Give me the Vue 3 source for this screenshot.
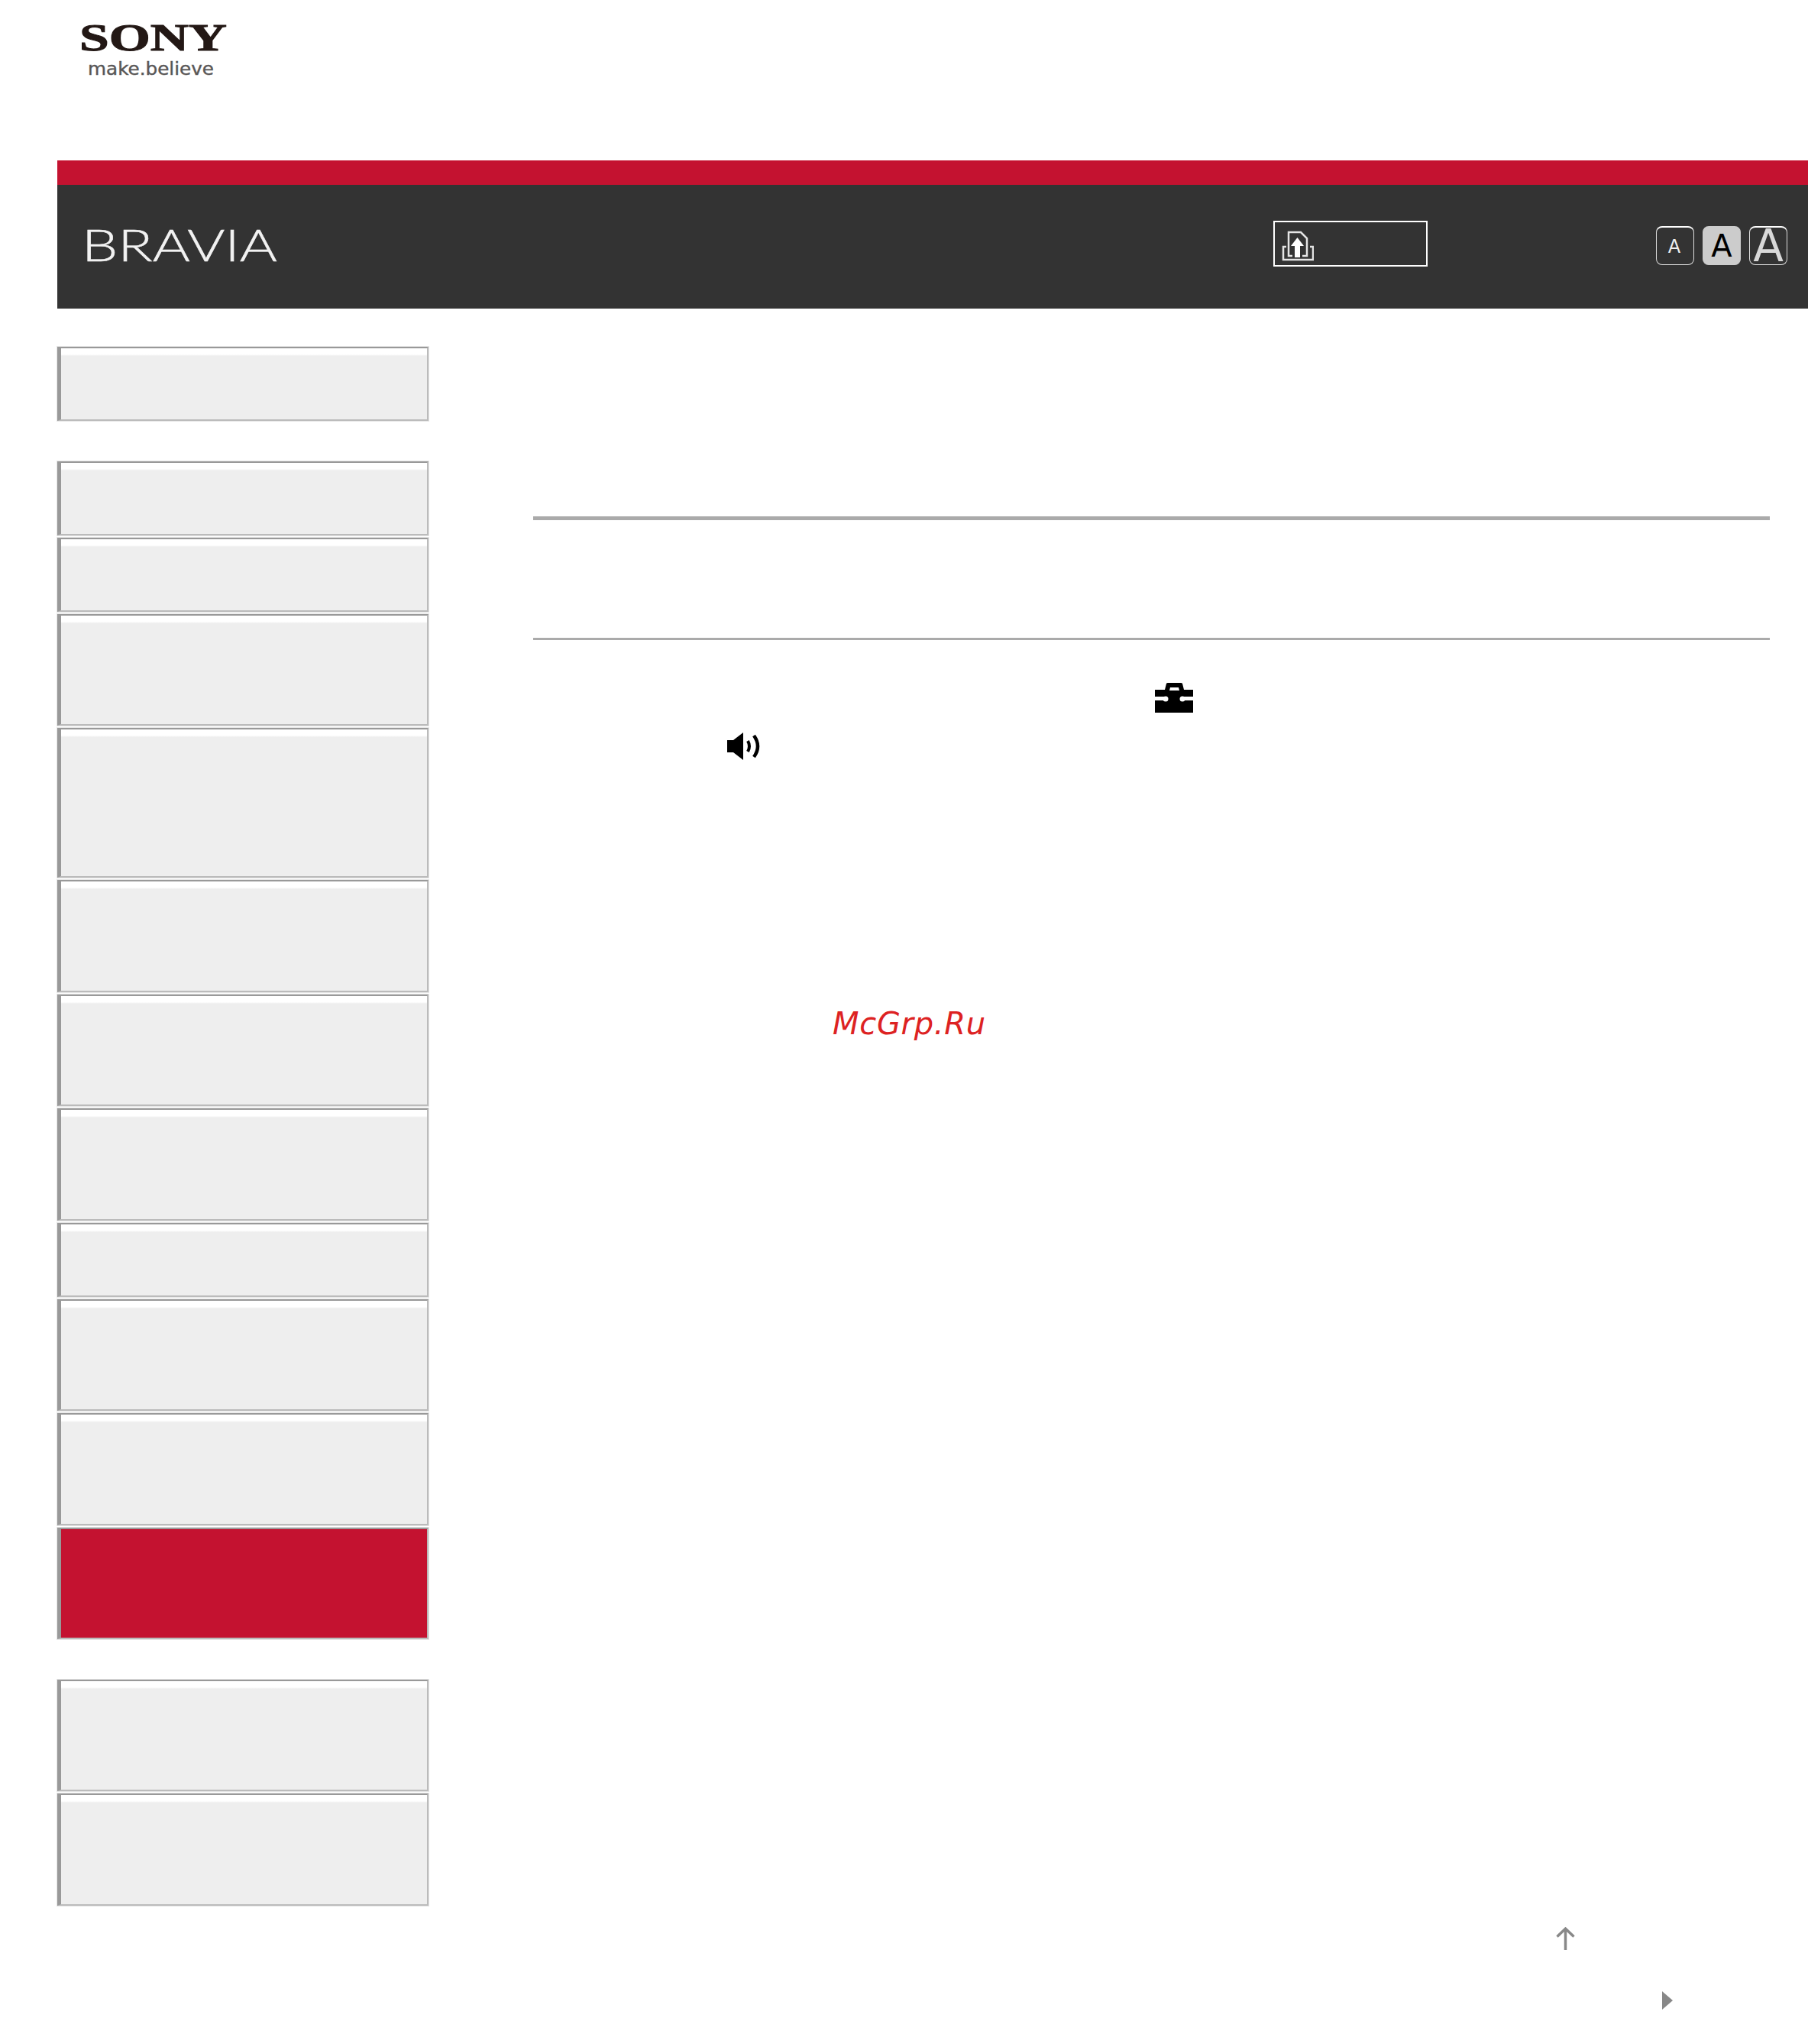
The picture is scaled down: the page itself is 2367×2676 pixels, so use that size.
<script setup>
const topItem = [{ size: 'single' }]
const mainItems = [
  { size: 'single' }, { size: 'single' }, { size: 'double' }, { size: 'triple' },
  { size: 'double' }, { size: 'double' }, { size: 'double' }, { size: 'single' },
  { size: 'double' }, { size: 'double' }, { size: 'double', active: true }
]
const bottomItems = [{ size: 'double' }, { size: 'double' }]
</script>

<template>
  <div class="page">
    <div class="logo-bar">
      <svg class="logo" width="210" height="100" viewBox="0 0 210 100">
        <text x="9" y="56" class="sony" textLength="193" lengthAdjust="spacingAndGlyphs">SONY</text>
        <text x="20" y="88" class="tagline" textLength="165" lengthAdjust="spacingAndGlyphs">make.believe</text>
      </svg>
    </div>

    <header class="header">
      <div class="red-band"></div>
      <div class="dark-band">
        <svg class="brand" width="280" height="80" viewBox="0 0 280 80">
          <text x="5" y="60" class="bravia" textLength="256" lengthAdjust="spacingAndGlyphs">BRAVIA</text>
        </svg>
        <div class="search-box">
          <svg width="42" height="40" viewBox="0 0 42 40" fill="none" stroke="#e4e4e4" stroke-width="2.500">
            <path d="M14 33H9V2H25L33 10V33H27" />
            <path d="M6 21H2V38H41V21H37" />
            <path d="M20.500 9L12 20H17V35H24V20H29Z" fill="#fff" stroke="none" />
          </svg>
        </div>
        <div class="sizes">
          <button class="size small">A</button>
          <button class="size medium">A</button>
          <button class="size large">A</button>
        </div>
      </div>
    </header>

    <div class="body">
      <nav class="sidebar">
        <div class="group">
          <a v-for="(item, i) in topItem" :key="i" class="nav-item" :class="item.size"></a>
        </div>
        <div class="group">
          <a v-for="(item, i) in mainItems" :key="i" class="nav-item" :class="[item.size, { active: item.active }]"></a>
        </div>
        <div class="group">
          <a v-for="(item, i) in bottomItems" :key="i" class="nav-item" :class="item.size"></a>
        </div>
      </nav>

      <main class="main">
        <div class="rule thick"></div>
        <div class="rule thin"></div>

        <div class="icon-row toolbox-row">
          <svg width="50" height="39" viewBox="0 0 50 39">
            <path fill-rule="evenodd" fill="#000" d="M13 9L15 1Q15.300 0 17 0H34Q35.700 0 36 1L38 9H50V18H0V9ZM19 10H32L31 6H20Z" />
            <path fill="#000" d="M0 23H50V39H0Z" />
            <rect x="14" y="18" width="22" height="5" fill="#000" />
            <circle cx="14" cy="21" r="3.500" fill="#fff" />
            <circle cx="36" cy="21" r="3.500" fill="#fff" />
          </svg>
        </div>

        <div class="icon-row speaker-row">
          <svg width="43" height="36" viewBox="0 0 43 36">
            <path fill="#000" d="M0 10H8L21 0V36L8 26H0Z" />
            <path fill="none" stroke="#000" stroke-width="4" d="M27 11Q31 18 27 25" />
            <path fill="none" stroke="#000" stroke-width="4.500" d="M35 4Q45 18 35 32" />
          </svg>
        </div>

        <div class="watermark">McGrp.Ru</div>

        <div class="up-row">
          <svg width="25" height="30" viewBox="0 0 25 30" fill="none" stroke="#888" stroke-width="3.500">
            <path d="M1.500 12.500L12.500 2L23.500 12.500" />
            <path d="M12.500 2V30" />
          </svg>
        </div>
        <div class="next-row">
          <svg width="14" height="24" viewBox="0 0 14 24">
            <path fill="#888" d="M0 0L14 12L0 24Z" />
          </svg>
        </div>
      </main>
    </div>
  </div>
</template>

<style>
html, body { margin: 0; background: #fff; }
</style>

<style scoped>
.page {
  width: 2367px;
  height: 2676px;
  background: #fff;
  font-family: "DejaVu Sans", sans-serif;
  overflow: hidden;
}
.logo-bar {
  height: 210px;
  box-sizing: border-box;
  padding: 10px 0 0 95px;
}
.logo { display: block; }
.sony {
  font-family: "Liberation Serif", serif;
  font-weight: 700;
  font-size: 50px;
  fill: #231815;
  stroke: #231815;
  stroke-width: 1px;
}
.tagline {
  font-family: "DejaVu Sans", sans-serif;
  font-size: 23px;
  fill: #595757;
  stroke: #595757;
  stroke-width: 0.4px;
}
.header { margin-left: 75px; }
.red-band { height: 32px; background: #c41230; }
.dark-band {
  height: 162px;
  background: #333;
  display: flex;
  align-items: center;
  padding: 0 27px 0 27px;
}
.brand { display: block; margin-top: -2px; flex: none; }
.bravia {
  font-family: "Lato", sans-serif;
  font-weight: 300;
  font-size: 58px;
  fill: #f2f2f2;
  stroke: #f2f2f2;
  stroke-width: 0.5px;
}
.search-box {
  width: 202px;
  height: 60px;
  box-sizing: border-box;
  border: 2px solid #fff;
  margin-left: 1285px;
  margin-top: -9px;
  padding: 11px 0 0 9px;
}
.search-box svg { display: block; }
.sizes {
  margin-left: auto;
  display: flex;
  gap: 11px;
  margin-top: -3px;
}
.size {
  width: 50px;
  height: 51px;
  box-sizing: border-box;
  padding: 0;
  border: 1px solid #ddd;
  border-top: 2px solid #fff;
  border-radius: 8px;
  background: transparent;
  color: #fff;
  font-family: "DejaVu Sans", sans-serif;
  line-height: 47px;
  text-align: center;
}
.small { font-size: 24px; padding: 2px 2px 0 0; color: #eee; }
.medium { font-size: 40px; background: #ccc; color: #000; border-color: #ccc; }
.large { font-size: 58px; line-height: 46px; color: #d8d8d8; }

.body { display: flex; align-items: flex-start; }
.sidebar {
  width: 486px;
  margin-left: 75px;
  padding-top: 50px;
  display: flex;
  flex-direction: column;
  gap: 52.500px;
}
.group { display: flex; flex-direction: column; gap: 3px; }
.nav-item {
  display: block;
  box-sizing: border-box;
  border-style: solid;
  border-width: 2px 2px 2px 5px;
  border-color: #999 #bbb #bbb #999;
  outline: 1px solid #e6e6e6;
  outline-offset: 0;
  background: linear-gradient(#fff 0, #fff 8px, #eee 10px);
}
.single { height: 97px; }
.double { height: 146.500px; }
.triple { height: 196px; }
.active { background: #c41230; }

.main {
  margin-left: 137px;
  width: 1619px;
  padding-top: 272px;
}
.rule { background: #aaa; }
.thick { height: 5px; }
.thin { height: 3px; margin-top: 154px; }
.icon-row svg { display: block; }
.toolbox-row { margin: 56px 0 0 814px; }
.speaker-row { margin: 26px 0 0 254px; }
.watermark {
  margin: 321px 0 0 392px;
  font-size: 40px;
  line-height: 48px;
  font-style: oblique;
  letter-spacing: 0.7px;
  color: #dd2222;
}
.up-row { margin: 1159px 0 0 1339px; }
.up-row svg { display: block; }
.next-row { margin: 54px 0 0 1478px; }
.next-row svg { display: block; }
</style>
